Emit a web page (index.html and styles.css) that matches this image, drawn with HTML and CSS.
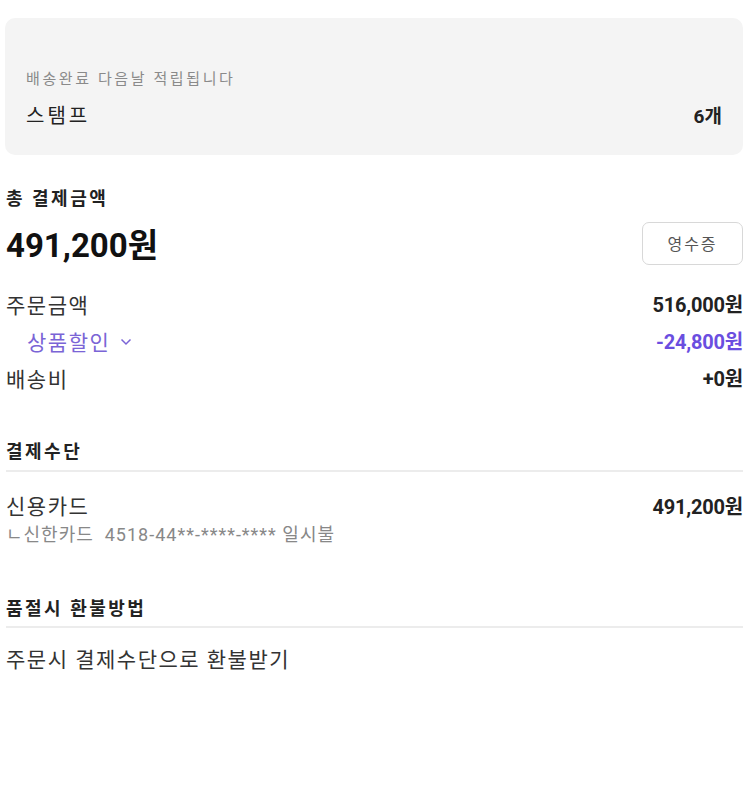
FILE: index.html
```html
<!DOCTYPE html>
<html lang="ko">
<head>
<meta charset="utf-8">
<link rel="stylesheet" href="styles.css">
</head>
<body>
<div class="page">
  <section class="stamp-card">
    <p class="stamp-note">배송완료 다음날 적립됩니다</p>
    <div class="stamp-row">
      <span class="stamp-label">스탬프</span>
      <span class="stamp-value">6개</span>
    </div>
  </section>

  <section class="total">
    <h3 class="total-title">총 결제금액</h3>
    <div class="total-row">
      <span class="total-amount">491,200원</span>
      <button class="receipt-btn">영수증</button>
    </div>
  </section>

  <section class="breakdown">
    <div class="row">
      <span class="label">주문금액</span>
      <span class="amount">516,000원</span>
    </div>
    <div class="row discount">
      <span class="label">상품할인
        <svg class="chev" width="12" height="8" viewBox="0 0 12 8"><path d="M1.5 1.5 L6 6 L10.5 1.5" fill="none" stroke="currentColor" stroke-width="1.5"/></svg>
      </span>
      <span class="amount">-24,800원</span>
    </div>
    <div class="row">
      <span class="label">배송비</span>
      <span class="amount">+0원</span>
    </div>
  </section>

  <section class="block pay">
    <h3 class="block-title">결제수단</h3>
    <div class="block-body">
      <div class="row">
        <span class="label">신용카드</span>
        <span class="amount">491,200원</span>
      </div>
      <p class="card-detail">ㄴ신한카드&nbsp;&nbsp;4518-44**-****-**** 일시불</p>
    </div>
  </section>

  <section class="block refund-block">
    <h3 class="block-title">품절시 환불방법</h3>
    <div class="block-body">
      <p class="refund">주문시 결제수단으로 환불받기</p>
    </div>
  </section>
</div>
</body>
</html>
```

FILE: styles.css
```css
* { box-sizing: border-box; }
html, body { margin: 0; padding: 0; background: #fff; }
body {
  font-family: Roboto, "Noto Sans CJK KR", sans-serif;
  color: #222;
}
.page {
  padding: 18px 7px 40px 6px;
}
p, h3 { margin: 0; }

.stamp-card {
  background: #f4f4f4;
  border-radius: 10px;
  padding: 48px 21px 27px 21px;
  margin-left: -1px;
}
.stamp-note {
  font-size: 15px;
  color: #8a8a8a;
  line-height: 26px;
  letter-spacing: 2.6px;
}
.stamp-row {
  display: flex;
  justify-content: space-between;
  align-items: center;
  margin-top: 8px;
  height: 28px;
}
.stamp-label { font-size: 20px; color: #222; letter-spacing: 3px; }
.stamp-value { font-size: 19px; font-weight: 700; color: #222; }

.total { margin-top: 31px; }
.total-title {
  font-size: 18px;
  font-weight: 700;
  color: #222;
  line-height: 26px;
  letter-spacing: 2.5px;
}
.total-row {
  display: flex;
  justify-content: space-between;
  align-items: center;
  margin-top: 7px;
}
.total-amount {
  font-size: 33px;
  font-weight: 700;
  color: #111;
}
.receipt-btn {
  width: 101px;
  height: 43px;
  border: 1px solid #d8d8d8;
  border-radius: 7px;
  background: #fff;
  font-family: inherit;
  font-size: 16px;
  letter-spacing: 2px;
  color: #555;
}

.breakdown { margin-top: 18px; }
.row {
  display: flex;
  justify-content: space-between;
  align-items: center;
  height: 37px;
}
.label {
  font-size: 21px;
  color: #333;
  letter-spacing: 1.5px;
  display: flex;
  align-items: center;
  gap: 10px;
}
.amount { font-size: 20px; font-weight: 700; color: #222; letter-spacing: -0.2px; }
.discount .label { color: #7a64d6; padding-left: 21px; }
.discount .amount { color: #6a4ee0; }
.chev { margin-top: 2px; }

.block-title {
  font-size: 18px;
  font-weight: 700;
  color: #222;
  line-height: 26px;
  letter-spacing: 2.5px;
  border-bottom: 2px solid #ececec;
}
.pay { margin-top: 43px; }
.pay .block-title { padding-bottom: 5px; }
.pay .block-body { padding-top: 18px; }
.block-body .row { height: 30px; }
.card-detail {
  font-size: 18px;
  color: #888;
  line-height: 30px;
  letter-spacing: 1px;
}
.refund-block { margin-top: 46px; }
.refund-block .block-title { padding-bottom: 4px; }
.refund-block .block-body { padding-top: 17px; }
.refund {
  font-size: 21px;
  color: #333;
  line-height: 30px;
  letter-spacing: 1.5px;
}
```
